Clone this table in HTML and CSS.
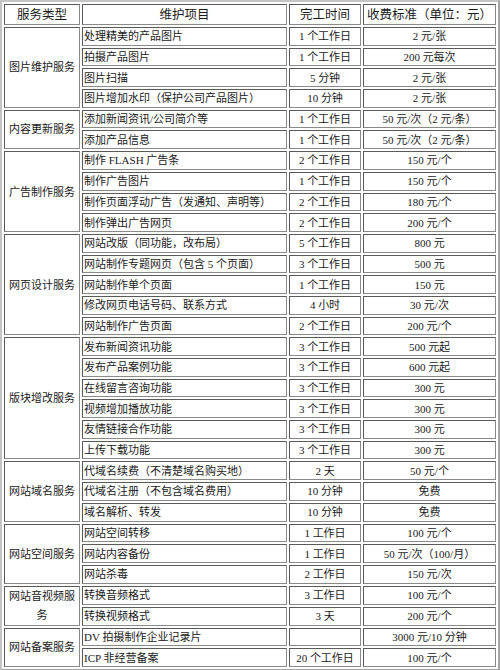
FILE: index.html
```html
<!DOCTYPE html>
<html>
<head>
<meta charset="utf-8">
<link rel="stylesheet" href="styles.css">
</head>
<body>
<table class="price">
  <colgroup>
    <col class="c1"><col class="c2"><col class="c3"><col class="c4">
  </colgroup>
  <thead>
    <tr class="head">
      <th>服务类型</th><th>维护项目</th><th>完工时间</th><th>收费标准（单位：元）</th>
    </tr>
  </thead>
  <tbody>
    <tr><td class="type" rowspan="4">图片维护服务</td><td class="item">处理精美的产品图片</td><td>1 个工作日</td><td>2 元/张</td></tr>
    <tr><td class="item">拍摄产品图片</td><td>1 个工作日</td><td>200 元每次</td></tr>
    <tr><td class="item">图片扫描</td><td>5 分钟</td><td>2 元/张</td></tr>
    <tr class="last"><td class="item">图片增加水印（保护公司产品图片）</td><td>10 分钟</td><td>2 元/张</td></tr>

    <tr><td class="type" rowspan="2">内容更新服务</td><td class="item">添加新闻资讯/公司简介等</td><td>1 个工作日</td><td>50 元/次（2 元/条）</td></tr>
    <tr class="last"><td class="item">添加产品信息</td><td>1 个工作日</td><td>50 元/次（2 元/条）</td></tr>

    <tr><td class="type" rowspan="4">广告制作服务</td><td class="item">制作 FLASH 广告条</td><td>2 个工作日</td><td>150 元/个</td></tr>
    <tr><td class="item">制作广告图片</td><td>1 个工作日</td><td>150 元/个</td></tr>
    <tr><td class="item">制作页面浮动广告（发通知、声明等）</td><td>2 个工作日</td><td>180 元/个</td></tr>
    <tr class="last"><td class="item">制作弹出广告网页</td><td>2 个工作日</td><td>200 元/个</td></tr>

    <tr><td class="type" rowspan="5">网页设计服务</td><td class="item">网站改版（同功能，改布局）</td><td>5 个工作日</td><td>800 元</td></tr>
    <tr><td class="item">网站制作专题网页（包含 5 个页面）</td><td>3 个工作日</td><td>500 元</td></tr>
    <tr><td class="item">网站制作单个页面</td><td>1 个工作日</td><td>150 元</td></tr>
    <tr><td class="item">修改网页电话号码、联系方式</td><td>4 小时</td><td>30 元/次</td></tr>
    <tr class="last"><td class="item">网站制作广告页面</td><td>2 个工作日</td><td>200 元/个</td></tr>

    <tr><td class="type" rowspan="6">版块增改服务</td><td class="item">发布新闻资讯功能</td><td>3 个工作日</td><td>500 元起</td></tr>
    <tr><td class="item">发布产品案例功能</td><td>3 个工作日</td><td>600 元起</td></tr>
    <tr><td class="item">在线留言咨询功能</td><td>3 个工作日</td><td>300 元</td></tr>
    <tr><td class="item">视频增加播放功能</td><td>3 个工作日</td><td>300 元</td></tr>
    <tr><td class="item">友情链接合作功能</td><td>3 个工作日</td><td>300 元</td></tr>
    <tr class="last"><td class="item">上传下载功能</td><td>3 个工作日</td><td>300 元</td></tr>

    <tr><td class="type" rowspan="3">网站域名服务</td><td class="item">代域名续费（不清楚域名购买地）</td><td>2 天</td><td>50 元/个</td></tr>
    <tr><td class="item">代域名注册（不包含域名费用）</td><td>10 分钟</td><td>免费</td></tr>
    <tr class="last"><td class="item">域名解析、转发</td><td>10 分钟</td><td>免费</td></tr>

    <tr><td class="type" rowspan="3">网站空间服务</td><td class="item">网站空间转移</td><td>1 工作日</td><td>100 元/个</td></tr>
    <tr><td class="item">网站内容备份</td><td>1 工作日</td><td>50 元/次（100/月）</td></tr>
    <tr class="last"><td class="item">网站杀毒</td><td>2 工作日</td><td>150 元/次</td></tr>

    <tr><td class="type wrap" rowspan="2">网站音视频服务</td><td class="item">转换音频格式</td><td>3 工作日</td><td>100 元/个</td></tr>
    <tr class="last"><td class="item">转换视频格式</td><td>3 天</td><td>200 元/个</td></tr>

    <tr><td class="type" rowspan="2">网站备案服务</td><td class="item">DV 拍摄制作企业记录片</td><td></td><td>3000 元/10 分钟</td></tr>
    <tr class="last"><td class="item">ICP 非经营备案</td><td>20 个工作日</td><td>100 元/个</td></tr>
  </tbody>
</table>
</body>
</html>
```

FILE: styles.css
```css
html, body {
  margin: 0;
  padding: 0;
  background: #ffffff;
}

.price {
  width: 500px;
  border-collapse: separate;
  border-spacing: 2px;
  border: 2px solid #a4a4a4;
  border-top-color: #c4c4c4;
  border-left-color: #c4c4c4;
  table-layout: fixed;
  font-family: "Liberation Serif", "Noto Sans CJK SC", serif;
  font-size: 11px;
  color: #1a1a1a;
}

.c1 { width: 76px; }
.c2 { width: 205px; }
.c3 { width: 72px; }
.c4 { width: 133px; }

.price th,
.price td {
  box-sizing: border-box;
  border: 1px solid #5a5a5a;
  border-right-color: #8a8a8a;
  border-bottom-color: #8a8a8a;
  padding: 0;
  text-align: center;
  vertical-align: middle;
  white-space: nowrap;
  overflow: hidden;
  line-height: 14px;
}

.price th {
  height: 21px;
  font-weight: normal;
  font-size: 12.5px;
}

.price td {
  height: 18.7px;
}

.price td.item {
  text-align: left;
  padding-left: 1px;
}

.price td.type {
  white-space: normal;
  padding: 0 1px;
}

.price td.wrap {
  line-height: 19px;
}
```
